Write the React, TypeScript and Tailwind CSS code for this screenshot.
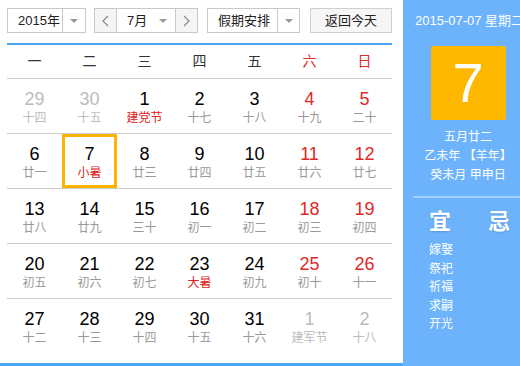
import React from "react";

type Day = { n: number; l: string; other?: boolean; fest?: boolean; sel?: boolean };

const rows: Day[][] = [
  [
    { n: 29, l: "十四", other: true },
    { n: 30, l: "十五", other: true },
    { n: 1, l: "建党节", fest: true },
    { n: 2, l: "十七" },
    { n: 3, l: "十八" },
    { n: 4, l: "十九" },
    { n: 5, l: "二十" },
  ],
  [
    { n: 6, l: "廿一" },
    { n: 7, l: "小暑", fest: true, sel: true },
    { n: 8, l: "廿三" },
    { n: 9, l: "廿四" },
    { n: 10, l: "廿五" },
    { n: 11, l: "廿六" },
    { n: 12, l: "廿七" },
  ],
  [
    { n: 13, l: "廿八" },
    { n: 14, l: "廿九" },
    { n: 15, l: "三十" },
    { n: 16, l: "初一" },
    { n: 17, l: "初二" },
    { n: 18, l: "初三" },
    { n: 19, l: "初四" },
  ],
  [
    { n: 20, l: "初五" },
    { n: 21, l: "初六" },
    { n: 22, l: "初七" },
    { n: 23, l: "大暑", fest: true },
    { n: 24, l: "初九" },
    { n: 25, l: "初十" },
    { n: 26, l: "十一" },
  ],
  [
    { n: 27, l: "十二" },
    { n: 28, l: "十三" },
    { n: 29, l: "十四" },
    { n: 30, l: "十五" },
    { n: 31, l: "十六" },
    { n: 1, l: "建军节", other: true },
    { n: 2, l: "十八", other: true },
  ],
];

const weekdays = ["一", "二", "三", "四", "五", "六", "日"];

function Caret() {
  return (
    <svg width="8" height="4" viewBox="0 0 8 4">
      <path d="M0 0 L8 0 L4 4 Z" fill="#999" />
    </svg>
  );
}

function Chevron({ dir }: { dir: "l" | "r" }) {
  return (
    <svg width="7" height="12" viewBox="0 0 7 12">
      <path
        d={dir === "l" ? "M6 1 L1 6 L6 11" : "M1 1 L6 6 L1 11"}
        fill="none"
        stroke="#888"
        strokeWidth="1.2"
      />
    </svg>
  );
}

export default function App() {
  const font = { fontFamily: '"Liberation Sans", Arial, "Noto Sans CJK SC", sans-serif' };
  return (
    <div
      className="w-[520px] h-[366px] flex overflow-hidden bg-white text-[#333]"
      style={font}
    >
      {/* Left calendar */}
      <div className="w-[403px] shrink-0 h-full flex flex-col border-b-[3px] border-[#4ea5f4] pl-[7px] pr-[11px]">
        {/* Controls */}
        <div className="flex items-center h-[25px] mt-[8px] text-[13px]">
          <div className="flex w-[79px] h-[25px] border border-[#c8c8c8]">
            <div className="w-[54px] flex items-center pl-[10px] text-[#222]">2015年</div>
            <div className="flex-1 border-l border-[#c8c8c8] flex items-center justify-center">
              <Caret />
            </div>
          </div>
          <div className="flex w-[104px] h-[25px] border border-[#c8c8c8] ml-[8px]">
            <div className="w-[22px] bg-[#f5f5f5] flex items-center justify-center border-r border-[#c8c8c8]">
              <Chevron dir="l" />
            </div>
            <div className="flex-1 flex items-center justify-between pl-[10px] pr-[8px] text-[#222]">
              <span>7月</span>
              <Caret />
            </div>
            <div className="w-[22px] bg-[#f5f5f5] flex items-center justify-center border-l border-[#c8c8c8]">
              <Chevron dir="r" />
            </div>
          </div>
          <div className="flex w-[93px] h-[25px] border border-[#c8c8c8] ml-[9px]">
            <div className="w-[69px] flex items-center pl-[10px] text-[#222]">假期安排</div>
            <div className="flex-1 border-l border-[#c8c8c8] flex items-center justify-center">
              <Caret />
            </div>
          </div>
          <div className="w-[82px] h-[25px] ml-[10px] border border-[#cfcfcf] bg-[#f6f6f6] flex items-center justify-center text-[#222]">
            返回今天
          </div>
        </div>

        {/* blue line */}
        <div className="h-[2px] bg-[#4ea5f4] mt-[10px]" />

        {/* weekday header */}
        <div className="grid grid-cols-7 h-[34px] border-b border-[#ccc] text-[14px]">
          {weekdays.map((w, i) => (
            <div
              key={w}
              className={`flex items-center justify-center ${i >= 5 ? "text-[#e02828]" : "text-[#333]"}`}
            >
              {w}
            </div>
          ))}
        </div>

        {/* days */}
        {rows.map((row, ri) => (
          <div
            key={ri}
            className={`grid grid-cols-7 h-[55px] ${ri < rows.length - 1 ? "border-b border-[#ccc]" : ""}`}
          >
            {row.map((d, ci) => {
              const numColor = d.other
                ? "text-[#bbbbbb]"
                : ci >= 5
                ? "text-[#e02828]"
                : "text-[#000]";
              const lunColor = d.other
                ? "text-[#bbbbbb]"
                : d.fest
                ? "text-[#e02020]"
                : "text-[#999]";
              return (
                <div key={ci} className="relative flex flex-col items-center pt-[9px]">
                  {d.sel && (
                    <div className="absolute left-0 right-0 top-0 bottom-0 border-[3px] border-[#fbb500]" />
                  )}
                  <div className={`text-[18px] leading-[22px] ${numColor}`}>{d.n}</div>
                  <div className={`text-[12px] leading-[16px] ${lunColor}`}>{d.l}</div>
                </div>
              );
            })}
          </div>
        ))}
      </div>

      {/* Right panel */}
      <div className="w-[130px] shrink-0 h-full bg-[#6db3fb] text-white flex flex-col">
        <div className="pl-[12px] pt-[13px] text-[13px] leading-[16px] whitespace-nowrap">
          2015-07-07 星期二
        </div>
        <div className="mx-auto mt-[17px] w-[75px] h-[74px] rounded-[2px] bg-[#ffb800] flex items-center justify-center text-[56px] leading-none">
          7
        </div>
        <div className="mt-[8px] flex flex-col items-center text-[12px] leading-[19px] whitespace-nowrap">
          <div>五月廿二</div>
          <div>乙未年 【羊年】</div>
          <div>癸未月 甲申日</div>
        </div>
        <div className="h-[2px] bg-[#a3cef8] mt-[11px] ml-[10px] mr-[10px]" />
        <div className="flex mt-[11px] text-[22px] leading-[26px] font-bold">
          <div className="ml-[26px]" style={{ textShadow: "0 1px 2px rgba(0,0,0,0.15)" }}>宜</div>
          <div className="ml-[37px]" style={{ textShadow: "0 1px 2px rgba(0,0,0,0.15)" }}>忌</div>
        </div>
        <div className="mt-[6px] ml-[26px] flex flex-col text-[12px] leading-[18.5px]">
          <div>嫁娶</div>
          <div>祭祀</div>
          <div>祈福</div>
          <div>求嗣</div>
          <div>开光</div>
        </div>
      </div>
    </div>
  );
}
